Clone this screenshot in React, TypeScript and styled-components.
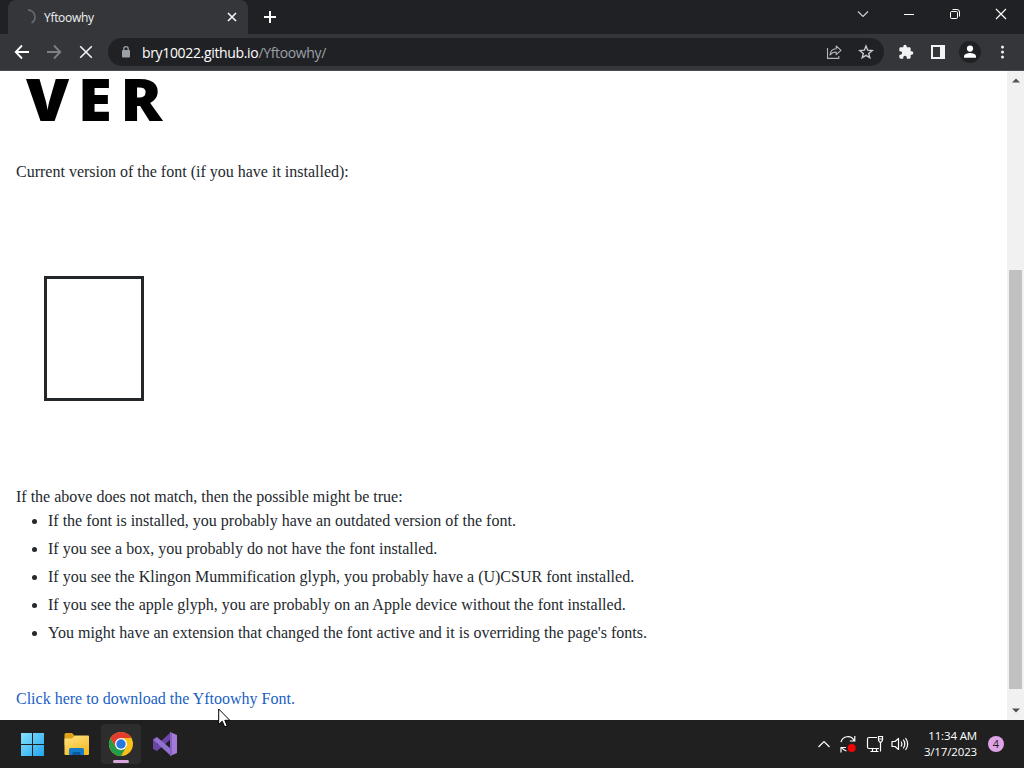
import React from "react"
import styled, { createGlobalStyle } from "styled-components"

const GlobalStyle = createGlobalStyle`
  * {
    box-sizing: border-box;
  }

  body {
    margin: 0;
    overflow: hidden;
  }

  svg {
    display: block;
    flex: none;
  }
`

const Desktop = styled.div`
  position: relative;
  display: flex;
  flex-direction: column;
  width: 1024px;
  height: 768px;
  overflow: hidden;
  background-color: #fff;
  font-family: "Open Sans", "Noto Sans", sans-serif;
`

const TabStrip = styled.div`
  display: flex;
  justify-content: space-between;
  height: 34px;
  background-color: #202124;
`

const TabGroup = styled.div`
  display: flex;
  padding-left: 8px;
`

const Tab = styled.div`
  display: flex;
  align-items: center;
  width: 240px;
  padding: 0 10px 0 14px;
  border-radius: 8px 8px 0 0;
  background-color: #35363a;
  color: #f1f3f4;
`

const TabTitle = styled.span`
  flex: 1;
  margin-left: 8px;
  font-size: 12px;
  letter-spacing: -0.3px;
`

const Slot = styled.div<{ $w: number }>`
  display: flex;
  flex: none;
  justify-content: center;
  align-items: center;
  width: ${props => props.$w}px;
`

const WindowButtons = styled.div`
  display: flex;
  height: 28px;
`

const Toolbar = styled.div`
  display: flex;
  height: 37px;
  padding: 0 6px;
  border-bottom: 1px solid #4b4c50;
  background-color: #35363a;
`

const Omnibox = styled.div`
  display: flex;
  align-items: center;
  width: 776px;
  height: 28px;
  margin: 4px 6px 0 6px;
  padding: 0 2px 0 10px;
  border-radius: 14px;
  background-color: #202124;
`

const Url = styled.div`
  flex: 1;
  margin-left: 8px;
  color: #9aa0a6;
  font-size: 14px;
  letter-spacing: -0.34px;

  span {
    color: #fff;
  }
`

const Viewport = styled.div`
  display: flex;
  height: 649px;
  background-color: #fff;
`

const Page = styled.main`
  flex: 1;
  padding-left: 16px;
  color: #24292e;
  font-family: "Liberation Serif", serif;
  font-size: 16px;
  line-height: 24px;
`

const Version = styled.h1`
  width: max-content;
  height: 89px;
  margin: 0;
  padding-left: 10px;
  color: #000;
  font-family: "Noto Sans", "Open Sans", sans-serif;
  font-size: 59px;
  font-weight: 900;
  line-height: 54px;
  letter-spacing: 8px;
  transform: scaleX(1.055);
  transform-origin: 10px 0;
`

const Line = styled.p`
  margin: 0;
`

const MissingGlyph = styled.div`
  width: 100px;
  height: 125px;
  margin: 92px 0 84px 28px;
  border: 3px solid #24272a;
`

const List = styled.ul`
  margin: 0 0 42px;
  padding-left: 32px;

  li + li {
    margin-top: 4px;
  }
`

const DownloadLink = styled.a`
  color: #1a5fc4;
  text-decoration: none;
`

const Scrollbar = styled.div`
  display: flex;
  flex-direction: column;
  align-items: center;
  width: 17px;
  padding: 7px 0;
  background-color: #f1f1f1;
`

const Thumb = styled.div`
  width: 13px;
  height: 419px;
  margin: 187px 0 auto;
  background-color: #c1c1c1;
`

const Taskbar = styled.footer`
  display: flex;
  justify-content: space-between;
  height: 48px;
  background-color: #202020;
`

const Apps = styled.div`
  display: flex;
  align-items: center;
  gap: 4px;
  padding-left: 13px;
`

const AppButton = styled.div<{ $active?: boolean }>`
  position: relative;
  display: flex;
  justify-content: center;
  align-items: center;
  width: 40px;
  height: 40px;
  border-radius: 4px;
  background-color: ${props => (props.$active ? "#2d2d2d" : "transparent")};

  &::after {
    content: "";
    display: ${props => (props.$active ? "block" : "none")};
    position: absolute;
    left: 12px;
    bottom: 1px;
    width: 16px;
    height: 3px;
    border-radius: 2px;
    background-color: #d8a6dc;
  }
`

const Tray = styled.div`
  display: flex;
  align-items: center;
  padding-right: 20px;
  color: #fff;
`

const Clock = styled.div`
  width: 67px;
  font-size: 11.5px;
  line-height: 16px;
  letter-spacing: -0.15px;
  text-align: right;
`

const Badge = styled.div`
  width: 16px;
  height: 16px;
  margin-left: 11px;
  border-radius: 50%;
  background-color: #dfa3e6;
  color: #222;
  font-size: 11px;
  line-height: 16px;
  text-align: center;
`

const Cursor = styled.svg`
  position: absolute;
  left: 218px;
  top: 708px;
`

const TabBar = () => (
  <TabStrip>
    <TabGroup>
      <Tab>
        <svg width="14" height="16" viewBox="0 0 14 16" fill="none" stroke="#66686d" strokeWidth="1.7">
          <path d="M6 1.2a6.9 6.9 0 0 1 3.6 12.8" />
        </svg>
        <TabTitle>Yftoowhy</TabTitle>
        <svg width="12" height="12" viewBox="0 0 12 12" stroke="#f1f3f4" strokeWidth="1.7">
          <path d="M2 2l8 8M10 2l-8 8" />
        </svg>
      </Tab>
      <Slot $w={44}>
        <svg width="14" height="14" viewBox="0 0 14 14" stroke="#fff" strokeWidth="2">
          <path d="M7 1v12M1 7h12" />
        </svg>
      </Slot>
    </TabGroup>
    <WindowButtons>
      <Slot $w={46}>
        <svg width="12" height="12" viewBox="0 0 12 12" fill="none" stroke="#d5d5d8" strokeWidth="1.1">
          <path d="M1 3.5l5 5 5-5" />
        </svg>
      </Slot>
      <Slot $w={46}>
        <svg width="12" height="12" viewBox="0 0 12 12" stroke="#fff">
          <path d="M1 6.5h10" />
        </svg>
      </Slot>
      <Slot $w={46}>
        <svg width="12" height="12" viewBox="0 0 12 12" fill="none" stroke="#fff">
          <rect x="1.5" y="3.5" width="7" height="7" rx="1.2" />
          <path d="M3.5 1.5H8a2.5 2.5 0 0 1 2.5 2.5v4.5" />
        </svg>
      </Slot>
      <Slot $w={46}>
        <svg width="12" height="12" viewBox="0 0 12 12" stroke="#fff" strokeWidth="1.2">
          <path d="M1 1l10 10M11 1L1 11" />
        </svg>
      </Slot>
    </WindowButtons>
  </TabStrip>
)

const AddressBar = () => (
  <Toolbar>
    <Slot $w={32}>
      <svg width="16" height="16" viewBox="0 0 16 16" fill="none" stroke="#fff" strokeWidth="1.8">
        <path d="M15 8H2M8 1.5L1.7 8 8 14.5" />
      </svg>
    </Slot>
    <Slot $w={32}>
      <svg width="16" height="16" viewBox="0 0 16 16" fill="none" stroke="#7f8084" strokeWidth="1.8">
        <path d="M1 8h13M8 1.5L14.3 8 8 14.5" />
      </svg>
    </Slot>
    <Slot $w={32}>
      <svg width="14" height="14" viewBox="0 0 14 14" stroke="#f1f3f4" strokeWidth="1.6">
        <path d="M1.2 1.2l11.6 11.6M12.8 1.2L1.2 12.8" />
      </svg>
    </Slot>
    <Omnibox>
      <svg width="16" height="16" viewBox="0 0 16 16">
        <rect x="4" y="6" width="8" height="7.5" rx="1" fill="#9aa0a6" />
        <path d="M5.8 6.5V4.8a2.2 2.2 0 0 1 4.4 0v1.7" fill="none" stroke="#9aa0a6" strokeWidth="1.3" />
      </svg>
      <Url>
        <span>bry10022.github.io</span>/Yftoowhy/
      </Url>
      <Slot $w={32}>
        <svg width="16" height="16" viewBox="0 0 16 16" fill="none" stroke="#b4b6ba" strokeWidth="1.1">
          <path d="M1.5 4v10.4h11.3V12" />
          <path d="M4 11c.4-3.8 2.5-6 6.2-6.2V2l4.8 4.3-4.8 4.3V8C7.4 8 5.4 9 4 11z" strokeLinejoin="round" />
        </svg>
      </Slot>
      <Slot $w={32}>
        <svg width="16" height="16" viewBox="0 0 16 16" fill="none" stroke="#c8cace" strokeWidth="1.4">
          <path d="M8 2l1.7 4.2 4.5.3-3.5 2.9 1.1 4.4L8 11.4l-3.8 2.4 1.1-4.4L1.8 6.5l4.5-.3z" />
        </svg>
      </Slot>
    </Omnibox>
    <Slot $w={32}>
      <svg width="16" height="16" viewBox="0 0 24 24" fill="#f1f3f4">
        <path d="M20.5 11H19V7c0-1.100-.9-2-2-2h-4V3.500a2.500 2.500 0 0 0-5 0V5H4c-1.100 0-2 .9-2 2v3.800h1.500a2.700 2.700 0 0 1 0 5.400H2V20c0 1.100.9 2 2 2h3.800v-1.500a2.700 2.700 0 0 1 5.400 0V22H17c1.100 0 2-.9 2-2v-4h1.500a2.500 2.500 0 0 0 0-5z" />
      </svg>
    </Slot>
    <Slot $w={32}>
      <svg width="14" height="14" viewBox="0 0 14 14">
        <path d="M0 0h14v14H0zM2 2v10h7V2z" fill="#f1f3f4" fillRule="evenodd" />
      </svg>
    </Slot>
    <Slot $w={32}>
      <svg width="22" height="22" viewBox="0 0 22 22">
        <circle cx="11" cy="11" r="11" fill="#202124" />
        <circle cx="11" cy="7.6" r="3.1" fill="#fff" />
        <path d="M5 16.8v-1.500c0-2 4-3.200 6-3.200s6 1.200 6 3.200v1.500z" fill="#fff" />
      </svg>
    </Slot>
    <Slot $w={32}>
      <svg width="4" height="14" viewBox="0 0 4 14" fill="#f1f3f4">
        <circle cx="2.5" cy="2" r="1.5" />
        <circle cx="2.5" cy="7" r="1.5" />
        <circle cx="2.5" cy="12" r="1.5" />
      </svg>
    </Slot>
  </Toolbar>
)

const reasons = [
  "If the font is installed, you probably have an outdated version of the font.",
  "If you see a box, you probably do not have the font installed.",
  "If you see the Klingon Mummification glyph, you probably have a (U)CSUR font installed.",
  "If you see the apple glyph, you are probably on an Apple device without the font installed.",
  "You might have an extension that changed the font active and it is overriding the page's fonts.",
]

const Content = () => (
  <Viewport>
    <Page>
      <Version>VER</Version>
      <Line>Current version of the font (if you have it installed):</Line>
      <MissingGlyph />
      <Line>If the above does not match, then the possible might be true:</Line>
      <List>
        {reasons.map(reason => (
          <li key={reason}>{reason}</li>
        ))}
      </List>
      <DownloadLink>Click here to download the Yftoowhy Font.</DownloadLink>
    </Page>
    <Scrollbar>
      <svg width="8" height="5" viewBox="0 0 8 5" fill="#505050">
        <path d="M4 0.5l4 4H0z" />
      </svg>
      <Thumb />
      <svg width="8" height="5" viewBox="0 0 8 5" fill="#505050">
        <path d="M0 0.5h8l-4 4z" />
      </svg>
    </Scrollbar>
  </Viewport>
)

const WindowsIcon = () => (
  <svg width="24" height="24" viewBox="0 0 24 24">
    <linearGradient id="win" x1="0" y1="0" x2="1" y2="1">
      <stop offset="0" stopColor="#86e2fc" />
      <stop offset="1" stopColor="#22a5ee" />
    </linearGradient>
    <path d="M0 1h11v11H0zM12 1h11v11H12zM0 13h11v11H0zM12 13h11v11H12z" fill="url(#win)" />
  </svg>
)

const ExplorerIcon = () => (
  <svg width="26" height="24" viewBox="0 0 26 24">
    <linearGradient id="folder" x1="0" y1="0" x2="0.5" y2="1">
      <stop offset="0" stopColor="#ffe282" />
      <stop offset="1" stopColor="#f7bd29" />
    </linearGradient>
    <path d="M.5 2.5Q.5 1 2 1h6l3 3H23v9H.5z" fill="#e1a21b" />
    <path d="M.5 6.5H8L11 3.5H24q1 0 1 1V22q0 1-1 1H1.5q-1 0-1-1z" fill="url(#folder)" />
    <path d="M5 23v-5.5Q5 16 6.5 16h12q1.5 0 1.5 1.5V23z" fill="#167bc9" />
    <path d="M8.500 23v-2q0-1 1-1h6q1 0 1 1v2z" fill="#0b5a9d" />
  </svg>
)

const ChromeIcon = () => (
  <svg width="24" height="24" viewBox="0 0 24 24">
    <circle cx="12" cy="12" r="12" fill="#fbc116" />
    <path d="M1.610 6A12 12 0 0 0 12 24l5.200-9H6.800z" fill="#269b49" />
    <path d="M1.610 6A12 12 0 0 1 22.390 6H12L6.800 15z" fill="#e33b2e" />
    <circle cx="12" cy="12" r="6" fill="#fff" />
    <circle cx="12" cy="12" r="4.7" fill="#2878e4" />
  </svg>
)

const VisualStudioIcon = () => (
  <svg width="24" height="24" viewBox="0 0 24 24">
    <path d="M0 7l4-2v14l-4-2z" fill="#6a45a5" />
    <path d="M4 19L18 7V0L1 15.5z" fill="#6b46a8" />
    <path d="M4 5l14 12v7L.5 8z" fill="#9270d0" />
    <path d="M17 0l7 3v18l-7 3z" fill="#a47ad8" />
    <path d="M17 0l2 1v22l-2 1z" fill="#8661c5" />
  </svg>
)

const BottomBar = () => (
  <Taskbar>
    <Apps>
      <AppButton>
        <WindowsIcon />
      </AppButton>
      <AppButton>
        <ExplorerIcon />
      </AppButton>
      <AppButton $active>
        <ChromeIcon />
      </AppButton>
      <AppButton>
        <VisualStudioIcon />
      </AppButton>
    </Apps>
    <Tray>
      <Slot $w={24}>
        <svg width="14" height="10" viewBox="0 0 14 10" fill="none" stroke="#fff" strokeWidth="1.2">
          <path d="M1.5 8L7 2.5 12.5 8" />
        </svg>
      </Slot>
      <Slot $w={24}>
        <svg width="18" height="18" viewBox="0 0 18 18" fill="none" stroke="#fff" strokeWidth="1.2">
          <path d="M2 7A7 7 0 0 1 15 5.5M15.8 1v5h-5M7.5 16A7 7 0 0 1 2.8 12.5M2 17.5v-5h5" />
          <circle cx="12.7" cy="13" r="4" fill="#f00505" stroke="none" />
        </svg>
      </Slot>
      <Slot $w={30}>
        <svg width="18" height="18" viewBox="0 0 18 18" fill="none" stroke="#fff" strokeWidth="1.2">
          <path d="M11 2.5H3Q1.5 2.5 1.5 4v8Q1.5 13.5 3 13.5h10M6.5 13.5v3M10.5 13.5v3M4.5 16.5h8M14.5 7v9.5M12.5 1.5h4V5l-1 2h-2l-1-2zM12.5 4h4" />
        </svg>
      </Slot>
      <Slot $w={20}>
        <svg width="18" height="16" viewBox="0 0 18 16" fill="none" stroke="#fff" strokeWidth="1.2">
          <path d="M1 5.5h3L7.5 2.5v11L4 10.5H1zM10 5.5q1.8 2.5 0 5M12.3 3.7q3 4.3 0 8.6M14.5 2q4.3 6 0 12" strokeLinejoin="round" />
        </svg>
      </Slot>
      <Clock>
        11:34 AM
        <br />
        3/17/2023
      </Clock>
      <Badge>4</Badge>
    </Tray>
  </Taskbar>
)

const App = () => (
  <Desktop>
    <GlobalStyle />
    <TabBar />
    <AddressBar />
    <Content />
    <BottomBar />
    <Cursor width="13" height="20" viewBox="0 0 13 20">
      <path d="M.7 1v15.5l3.5-3.3 2.5 5.6 2.5-1.100-2.4-5.400h5z" fill="#fff" stroke="#000" />
    </Cursor>
  </Desktop>
)

export default App
